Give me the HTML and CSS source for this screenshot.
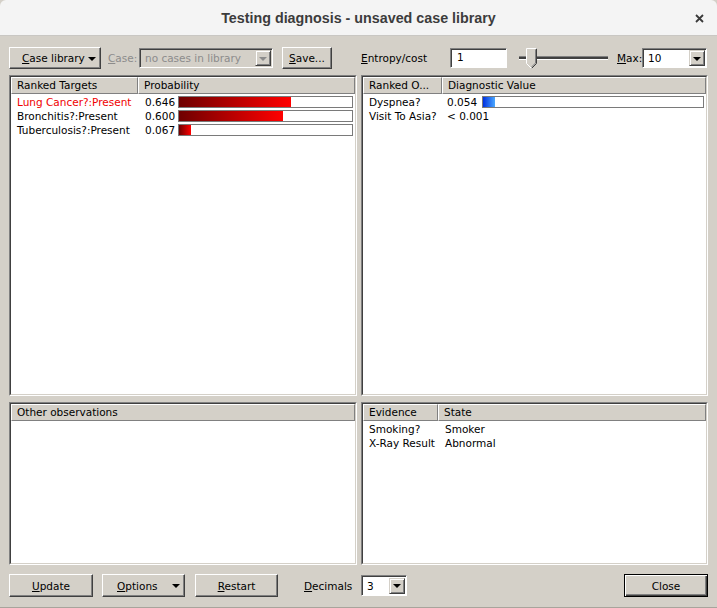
FILE: index.html
```html
<!DOCTYPE html>
<html>
<head>
<meta charset="utf-8">
<link rel="stylesheet" href="styles.css">
</head>
<body>
<div class="window">
  <header class="titlebar">
    <div class="title">Testing diagnosis - unsaved case library</div>
    <svg class="close-x" width="9" height="9" viewBox="0 0 9 9"><path d="M1 1L8 8M8 1L1 8" stroke="#3a3a3a" stroke-width="1.8" fill="none"/></svg>
  </header>
  <main class="body">
    <div class="toolbar">
      <div class="btn btn-menu w-case"><span><u>C</u>ase library</span><span class="tri"></span></div>
      <span class="lbl lbl-case disabled"><u>C</u>ase:</span>
      <div class="combo combo-case disabled"><span class="combo-text">no cases in library</span><span class="drop"><span class="tri tri-dis"></span></span></div>
      <div class="btn w-save"><span><u>S</u>ave...</span></div>
      <span class="lbl lbl-entropy"><u>E</u>ntropy/cost</span>
      <div class="field">1</div>
      <div class="slider">
        <div class="track"></div>
        <svg class="thumb" width="11" height="21" viewBox="0 0 11 21">
          <path d="M0.5 0.5H10.5V15.5L5.5 20.5L0.5 15.5Z" fill="#d4d0c8"/>
          <path d="M9.5 1.5V15L5.5 19" stroke="#808080" fill="none"/>
          <path d="M10.5 0.5V15.5L5.5 20.5" stroke="#404040" fill="none"/>
          <path d="M5.5 20.5L0.5 15.5V0.5H10.5" stroke="#ffffff" fill="none"/>
        </svg>
      </div>
      <span class="lbl lbl-max"><u>M</u>ax:</span>
      <div class="combo combo-max"><span class="combo-text">10</span><span class="drop"><span class="tri"></span></span></div>
    </div>

    <div class="panels">
      <section class="panel">
        <div class="panel-in">
          <div class="thead">
            <div class="th" style="width:127px">Ranked Targets</div>
            <div class="th th-last">Probability</div>
          </div>
          <div class="rows rows-targets">
            <div class="row"><span class="c-name red">Lung Cancer?:Present</span><span class="c-val">0.646</span><span class="bar"><span class="fill red-fill" style="width:64.6%"></span></span></div>
            <div class="row"><span class="c-name">Bronchitis?:Present</span><span class="c-val">0.600</span><span class="bar"><span class="fill red-fill" style="width:60%"></span></span></div>
            <div class="row"><span class="c-name">Tuberculosis?:Present</span><span class="c-val">0.067</span><span class="bar"><span class="fill red-fill" style="width:6.7%"></span></span></div>
          </div>
        </div>
      </section>
      <section class="panel">
        <div class="panel-in">
          <div class="thead">
            <div class="th" style="width:79px">Ranked O...</div>
            <div class="th th-last">Diagnostic Value</div>
          </div>
          <div class="rows rows-obs">
            <div class="row"><span class="c-name">Dyspnea?</span><span class="c-val">0.054</span><span class="bar"><span class="fill blue-fill" style="width:5.4%"></span></span></div>
            <div class="row"><span class="c-name">Visit To Asia?</span><span class="c-val">&lt; 0.001</span></div>
          </div>
        </div>
      </section>
      <section class="panel">
        <div class="panel-in">
          <div class="thead">
            <div class="th th-last">Other observations</div>
          </div>
        </div>
      </section>
      <section class="panel">
        <div class="panel-in">
          <div class="thead">
            <div class="th" style="width:75px">Evidence</div>
            <div class="th th-last">State</div>
          </div>
          <div class="rows rows-ev">
            <div class="row"><span class="c-name">Smoking?</span><span class="c-val">Smoker</span></div>
            <div class="row"><span class="c-name">X-Ray Result</span><span class="c-val">Abnormal</span></div>
          </div>
        </div>
      </section>
    </div>

    <div class="footer">
      <div class="btn w-update"><span><u>U</u>pdate</span></div>
      <div class="btn btn-menu w-options"><span><u>O</u>ptions</span><span class="tri"></span></div>
      <div class="btn w-restart"><span><u>R</u>estart</span></div>
      <span class="lbl lbl-dec"><u>D</u>ecimals</span>
      <div class="combo combo-dec"><span class="combo-text">3</span><span class="drop"><span class="tri"></span></span></div>
      <div class="btn btn-default w-close"><span>Close</span></div>
    </div>
  </main>
</div>
</body>
</html>
```

FILE: styles.css
```css
* { box-sizing: border-box; }
html, body { margin: 0; padding: 0; }
body {
  width: 717px;
  height: 608px;
  overflow: hidden;
  background: #d4d0c8;
  font-family: "DejaVu Sans", sans-serif;
  font-size: 10.5px;
  color: #000;
}
u { text-decoration: underline; text-underline-offset: 1px; }

.window { width: 717px; height: 608px; display: flex; flex-direction: column; }

.titlebar {
  height: 36px;
  flex: none;
  background: #f4f4f4;
  border-bottom: 1px solid #c9c7c3;
  border-radius: 6px 6px 0 0;
  display: flex;
  align-items: center;
  justify-content: center;
  position: relative;
}
.title {
  font-family: "Liberation Sans", sans-serif;
  font-weight: bold;
  font-size: 14.3px;
  color: #3c3c3c;
  padding-top: 1px;
}
.close-x { position: absolute; right: 13px; top: 14px; }

.body {
  flex: 1;
  display: flex;
  flex-direction: column;
  padding: 11px 9px 0 9px;
  border-bottom: 1px solid #a8a49c;
}

/* toolbar */
.toolbar { display: flex; align-items: center; height: 22px; }
.lbl { white-space: nowrap; }
.disabled { color: #8c8c8c; }
.lbl-case { margin-left: 7px; width: 31px; }
.lbl-entropy { margin-left: 29px; width: 89px; }
.lbl-max { margin-left: 9px; width: 25px; }

.btn {
  height: 22px;
  display: flex;
  align-items: center;
  justify-content: center;
  background: #d4d0c8;
  border: 1px solid;
  border-color: #ffffff #404040 #404040 #ffffff;
  box-shadow: inset -1px -1px #808080;
  white-space: nowrap;
}
.btn-menu { justify-content: space-between; padding: 0 4px 0 12px; }
.w-case { width: 92px; }
.w-save { width: 50px; margin-left: 9px; }

.tri {
  width: 0; height: 0;
  border-left: 4px solid transparent;
  border-right: 4px solid transparent;
  border-top: 4px solid #000;
  margin-top: 1px;
}
.tri-dis { border-top-color: #8c8c8c; }

.combo {
  display: flex;
  align-items: center;
  height: 20px;
  border: 1px solid;
  border-color: #808080 #ffffff #ffffff #808080;
  box-shadow: inset 1px 1px #404040;
  background: #fff;
  padding: 1px 1px 1px 1px;
}
.combo-text { flex: 1; padding-left: 4px; white-space: nowrap; overflow: hidden; }
.combo.disabled { background: #d4d0c8; }
.drop {
  width: 16px;
  height: 16px;
  display: flex;
  align-items: center;
  justify-content: center;
  background: #d4d0c8;
  border: 1px solid;
  border-color: #d4d0c8 #404040 #404040 #d4d0c8;
  box-shadow: inset 1px 1px #fff, inset -1px -1px #808080;
}
.combo-case { width: 134px; }
.combo-max { width: 65px; }

.field {
  width: 57px;
  height: 20px;
  background: #fff;
  border: 1px solid;
  border-color: #808080 #ffffff #ffffff #808080;
  box-shadow: inset 1px 1px #404040;
  padding: 2px 0 0 6px;
}

.slider { position: relative; width: 90px; height: 22px; margin-left: 11px; }
.track {
  position: absolute; left: 1px; right: 0; top: 9px;
  border-top: 1px solid #808080;
  border-bottom: 1px solid #ffffff;
  background: #404040;
  height: 4px;
}
.thumb { position: absolute; left: 8px; top: 1px; }

/* panels */
.panels {
  margin-top: 6px;
  display: grid;
  grid-template-columns: 348px 347px;
  grid-template-rows: 321px 163px;
  column-gap: 4px;
  row-gap: 6px;
}
.panel {
  border: 1px solid;
  border-color: #808080 #ffffff #ffffff #808080;
}
.panel-in {
  height: 100%;
  background: #fff;
  border: 1px solid;
  border-color: #404040 #d4d0c8 #d4d0c8 #404040;
}
.thead { display: flex; height: 17px; background: #d4d0c8; }
.th {
  height: 17px;
  border: 1px solid;
  border-color: #ffffff #808080 #808080 #ffffff;
  padding: 1px 0 0 5px;
  white-space: nowrap;
  overflow: hidden;
}
.th-last { flex: 1; }

.rows { padding-top: 1px; }
.row { display: flex; align-items: center; height: 14px; white-space: nowrap; }
.c-name { padding-left: 6px; }
.red { color: #f00000; }
.bar {
  flex: 1;
  height: 12px;
  margin-right: 2px;
  background: #fff;
  border: 1px solid #7a7a7a;
  display: flex;
}
.fill { height: 100%; }
.red-fill { background: linear-gradient(to right, #6e0000, #ff0000); }
.blue-fill { background: linear-gradient(to right, #0030e0, #4aa8ff); }

.rows-targets .c-name { width: 127px; }
.rows-targets .c-val { width: 40px; padding-left: 7px; }
.rows-obs .c-name { width: 79px; }
.rows-obs .c-val { width: 40px; padding-left: 5px; }
.rows-ev .c-name { width: 75px; }
.rows-ev .c-val { padding-left: 7px; }

/* footer */
.footer { display: flex; align-items: center; margin-top: 9px; height: 23px; }
.footer .btn { height: 23px; }
.w-update { width: 84px; }
.w-options { width: 83px; margin-left: 9px; padding-left: 14px; }
.w-restart { width: 83px; margin-left: 10px; }
.lbl-dec { margin-left: 26px; width: 57px; }
.combo-dec { width: 46px; height: 21px; }
.btn-default {
  margin-left: auto;
  border: 1px solid #000;
  box-shadow: inset 1px 1px #fff, inset -1px -1px #404040, inset -2px -2px #808080;
}
.w-close { width: 84px; }
```
